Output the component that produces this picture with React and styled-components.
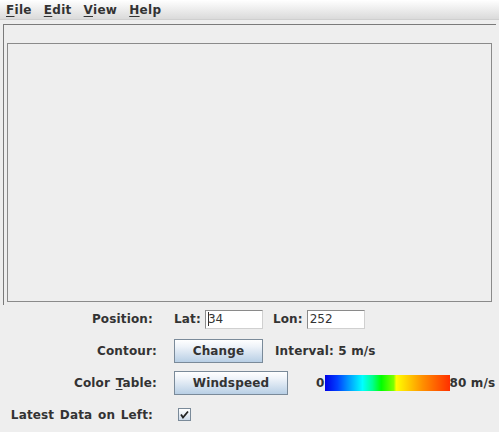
import React from 'react';
import styled, { createGlobalStyle } from 'styled-components';

const GlobalStyle = createGlobalStyle`
  html, body {
    margin: 0;
    padding: 0;
    background: #eeeeee;
  }
  body {
    font-family: "DejaVu Sans", sans-serif;
    font-size: 12px;
    color: #333333;
  }
`;

const Window = styled.div`
  width: 499px;
  height: 432px;
  background: #eeeeee;
  overflow: hidden;
`;

const MenuBar = styled.div`
  display: flex;
  height: 20px;
  align-items: center;
  padding-left: 6px;
  gap: 12px;
  background: linear-gradient(#ffffff, #dadada);
  border-bottom: 1px solid #cfcfcf;
  box-sizing: border-box;
`;

const MenuItem = styled.span`
  font-weight: bold;
  font-size: 12px;
  letter-spacing: 0.3px;
  color: #333;
  & u {
    text-decoration: underline;
    text-underline-offset: 2px;
  }
`;

const Frame = styled.div`
  margin: 4px 3px 0 3px;
  height: 281px;
  box-sizing: border-box;
  border-top: 1px solid #7a7a7a;
  border-left: 1px solid #7a7a7a;
  padding: 18px 4px 3px 3px;
`;

const Display = styled.div`
  height: 100%;
  box-sizing: border-box;
  border: 1px solid #8a8a8a;
`;

const Form = styled.div`
  display: grid;
  grid-template-columns: 158px 1fr;
  grid-template-rows: 32px 32px 32px 31px;
  margin-top: -2px;
  align-items: center;
`;

const Label = styled.div`
  font-weight: bold;
  text-align: right;
  letter-spacing: 0.15px;
  word-spacing: 1.3px;
  padding-right: ${p => p.$inset}px;
  white-space: nowrap;
  & u {
    text-underline-offset: 2px;
  }
`;

const Cell = styled.div`
  display: flex;
  align-items: center;
  padding-left: ${p => p.$indent || 16}px;
  white-space: nowrap;
`;

const Small = styled.span`
  font-weight: bold;
  letter-spacing: 0.15px;
  margin-right: ${p => p.$gap ?? 4}px;
  margin-left: ${p => p.$left || 0}px;
`;

const Field = styled.div`
  width: 58px;
  height: 19px;
  box-sizing: border-box;
  background: #fff;
  border: 1px solid #8a8a8a;
  border-right-color: #d0d0d0;
  border-bottom-color: #d0d0d0;
  padding-left: 2px;
  font-size: 12px;
  line-height: 17px;
  color: #333;
  display: flex;
  align-items: center;
`;

const Caret = styled.span`
  display: inline-block;
  width: 1px;
  height: 14px;
  background: #333;
  margin-right: -1px;
`;

const Button = styled.div`
  width: ${p => p.$width}px;
  height: 24px;
  box-sizing: border-box;
  border: 1px solid #7a8a99;
  background: linear-gradient(#ffffff 0%, #eef3f9 30%, #b8cfe5 100%);
  display: flex;
  align-items: center;
  justify-content: center;
  font-weight: bold;
  letter-spacing: 0.15px;
  color: #333;
`;

const Bar = styled.div`
  width: 125px;
  height: 16px;
  flex-shrink: 0;
  background: linear-gradient(
    to right,
    #0000e6 0%,
    #0040ff 10%,
    #0090ff 18%,
    #00ffff 30%,
    #00ff90 38%,
    #00ff00 45%,
    #80ff00 55%,
    #ffff00 57%,
    #ffd000 66%,
    #ff9000 78%,
    #ff3000 100%
  );
`;

const Check = styled.div`
  width: 13px;
  height: 13px;
  box-sizing: border-box;
  border: 1px solid #7a8a99;
  background: linear-gradient(#ffffff, #cddaea);
  display: flex;
  align-items: center;
  justify-content: center;
`;

export default function App() {
  return (
    <Window>
      <GlobalStyle />
      <MenuBar>
        <MenuItem><u>F</u>ile</MenuItem>
        <MenuItem><u>E</u>dit</MenuItem>
        <MenuItem><u>V</u>iew</MenuItem>
        <MenuItem><u>H</u>elp</MenuItem>
      </MenuBar>
      <Frame>
        <Display />
      </Frame>
      <Form>
        <Label $inset={5}>Position:</Label>
        <Cell>
          <Small>Lat:</Small>
          <Field><Caret />34</Field>
          <Small $left={10}>Lon:</Small>
          <Field>252</Field>
        </Cell>

        <Label $inset={1}>Contour:</Label>
        <Cell>
          <Button $width={89}>Change</Button>
          <Small $left={12}>Interval: 5 m/s</Small>
        </Cell>

        <Label $inset={1}>Color <u>T</u>able:</Label>
        <Cell>
          <Button $width={114}>Windspeed</Button>
          <Small $left={28} $gap={0}>0</Small>
          <Bar />
          <Small $gap={0}>80 m/s</Small>
        </Cell>

        <Label $inset={5}>Latest Data on Left:</Label>
        <Cell $indent={20}>
          <Check>
            <svg width="9" height="9" viewBox="0 0 9 9">
              <path d="M1 4.5 L3 7.5 L8 1.5" stroke="#222" strokeWidth="1.8" fill="none" />
            </svg>
          </Check>
        </Cell>
      </Form>
    </Window>
  );
}
